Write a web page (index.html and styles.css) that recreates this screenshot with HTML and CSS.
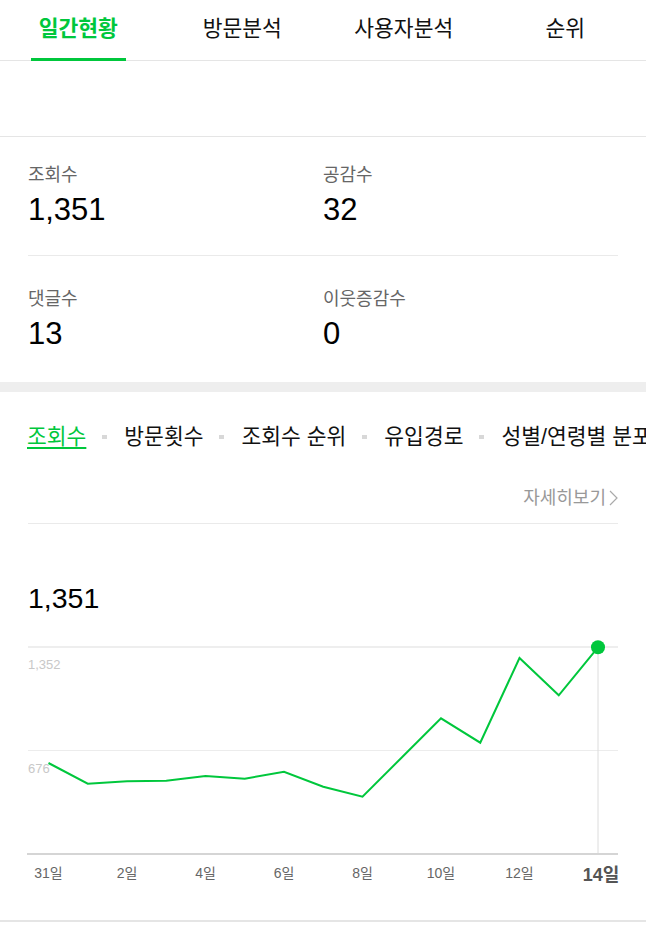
FILE: index.html
```html
<!DOCTYPE html>
<html lang="ko">
<head>
    <meta charset="UTF-8">
    <meta name="viewport" content="width=device-width, initial-scale=1.0">
    <title>블로그 통계</title>
    <link rel="stylesheet" href="styles.css">
</head>
<body>
    <nav class="tabs">
        <a class="tab active" href="#">일간현황</a>
        <a class="tab" href="#">방문분석</a>
        <a class="tab" href="#">사용자분석</a>
        <a class="tab" href="#">순위</a>
    </nav>

    <div class="spacer"></div>

    <section class="stats">
        <div class="stat-row">
            <div class="stat">
                <div class="stat-label">조회수</div>
                <div class="stat-value">1,351</div>
            </div>
            <div class="stat">
                <div class="stat-label">공감수</div>
                <div class="stat-value">32</div>
            </div>
        </div>
        <div class="stat-row">
            <div class="stat">
                <div class="stat-label">댓글수</div>
                <div class="stat-value">13</div>
            </div>
            <div class="stat">
                <div class="stat-label">이웃증감수</div>
                <div class="stat-value">0</div>
            </div>
        </div>
    </section>

    <div class="band"></div>

    <section class="chart">
        <ul class="sub-tabs">
            <li class="active">조회수</li>
            <li>방문횟수</li>
            <li>조회수 순위</li>
            <li>유입경로</li>
            <li>성별/연령별 분포</li>
        </ul>

        <div class="more">
            <a href="#">자세히보기<svg class="chevron" width="9" height="16" viewBox="0 0 9 16"><polyline points="1,1 8,8 1,15" fill="none" stroke="#aaa" stroke-width="1.2"/></svg></a>
        </div>

        <div class="chart-total">1,351</div>

        <svg class="graph" width="646" height="260" viewBox="0 0 646 260">
            <line x1="28" y1="18" x2="618" y2="18" stroke="#e8e8e8" stroke-width="1.5"/>
            <line x1="28" y1="121.5" x2="618" y2="121.5" stroke="#ececec" stroke-width="1"/>
            <line x1="598" y1="18" x2="598" y2="224" stroke="#dcdcdc" stroke-width="1"/>
            <line x1="27" y1="225" x2="618" y2="225" stroke="#d5d5d5" stroke-width="2"/>

            <text class="y-label" x="28" y="40">1,352</text>
            <text class="y-label" x="28" y="144">676</text>

            <polyline fill="none" stroke="#00c73c" stroke-width="2" stroke-linejoin="miter"
                points="48.5,134 87.75,154.7 127,152.3 166.25,151.7 205.5,147 244.75,149.7 284,142.7 323.25,157.7 362.5,167.7 401.75,128.5 441,89.3 480.25,113.7 519.5,29 558.75,66.3 598,18.3"/>
            <circle cx="598" cy="18.3" r="7" fill="#00c73c"/>

            <text class="x-label" x="48.5" y="249">31일</text>
            <text class="x-label" x="127" y="249">2일</text>
            <text class="x-label" x="205.5" y="249">4일</text>
            <text class="x-label" x="284" y="249">6일</text>
            <text class="x-label" x="362.5" y="249">8일</text>
            <text class="x-label" x="441" y="249">10일</text>
            <text class="x-label" x="519.5" y="249">12일</text>
            <text class="x-label today" x="601" y="252">14일</text>
        </svg>
    </section>
</body>
</html>
```

FILE: styles.css
```css
body {
    font-family: "Liberation Sans", "Noto Sans CJK KR", sans-serif;
    background-color: #fff;
    color: #111;
    margin: 0;
}
a {
    color: inherit;
    text-decoration: none;
}
.tabs {
    display: grid;
    grid-template-columns: repeat(4, 1fr);
    height: 61px;
    box-sizing: border-box;
    border-bottom: 1px solid #e5e5e5;
}
.tab {
    justify-self: center;
    position: relative;
    padding: 16px 8px 0;
    font-size: 21.5px;
    line-height: 26px;
    color: #111;
}
.tab.active {
    color: #00c73c;
    font-weight: bold;
    margin-left: -5px;
}
.tab.active::after {
    content: "";
    position: absolute;
    left: 0;
    right: 0;
    bottom: -1px;
    height: 3px;
    background: #00c73c;
}
.spacer {
    height: 75px;
    border-bottom: 1px solid #e5e5e5;
}
.stats {
    padding: 0 28px;
}
.stat-row {
    display: grid;
    grid-template-columns: 1fr 1fr;
    padding: 28px 0 27px;
}
.stat-row + .stat-row {
    border-top: 1px solid #eaeaea;
    padding: 33px 0 30px;
}
.stat-label {
    font-size: 18px;
    line-height: 20px;
    color: #666;
}
.stat-value {
    margin-top: 7px;
    font-size: 31px;
    line-height: 36px;
    color: #000;
}
.band {
    height: 10px;
    background: #eee;
}
.chart {
    padding: 0 28px;
    border-bottom: 2px solid #e5e5e5;
    padding-bottom: 31px;
}
.sub-tabs {
    list-style: none;
    margin: 0 -28px 0 -1px;
    padding: 32px 0 0;
    display: flex;
    white-space: nowrap;
    overflow: hidden;
    font-size: 21.5px;
    line-height: 26px;
    color: #111;
}
.sub-tabs li {
    flex-shrink: 0;
    display: flex;
    align-items: center;
}
.sub-tabs li + li::before {
    content: "";
    width: 5px;
    height: 4px;
    background: #d8d8d8;
    margin: 0 17px 0 16px;
}
.sub-tabs li.active {
    color: #00c73c;
    text-decoration: underline;
    text-underline-offset: 3px;
}
.more {
    margin-top: 38px;
    padding-bottom: 14px;
    border-bottom: 1px solid #eaeaea;
    text-align: right;
    font-size: 18px;
    line-height: 21px;
    color: #999;
}
.chevron {
    margin-left: 3px;
    margin-right: 0;
    vertical-align: -2px;
}
.chart-total {
    margin-top: 58px;
    font-size: 28.5px;
    line-height: 32px;
    color: #000;
}
.graph {
    display: block;
    margin: 15px -28px 0;
}
.y-label {
    font-size: 13px;
    fill: #c8c8c8;
}
.x-label {
    font-size: 14px;
    fill: #666;
    text-anchor: middle;
}
.x-label.today {
    font-size: 18px;
    font-weight: bold;
    fill: #555;
}
```
